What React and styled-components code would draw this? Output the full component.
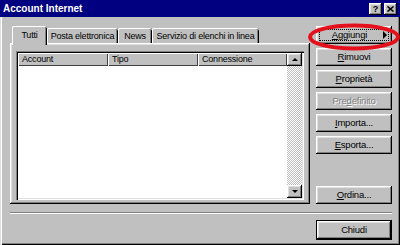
import React from 'react';
import styled, { createGlobalStyle } from 'styled-components';

const GlobalStyle = createGlobalStyle`
  html, body {
    margin: 0;
    padding: 0;
    background: #c0c0c0;
  }
  body {
    font-family: "Liberation Sans", Arial, sans-serif;
  }
  * {
    box-sizing: border-box;
  }
`;

const raised = `
  box-shadow: inset -1px -1px #000, inset 1px 1px #fff,
    inset -2px -2px #808080, inset 2px 2px #dfdfdf;
`;

const sunken = `
  box-shadow: inset 1px 1px #808080, inset 2px 2px #000,
    inset -1px -1px #fff, inset -2px -2px #dfdfdf;
`;

export default function App() {
  return (
    <>
      <GlobalStyle />
      <Window>
        <TitleBar>
          <span>Account Internet</span>
          <TitleButtons>
            <TitleButton>?</TitleButton>
            <TitleButton>
              <svg width="7" height="6" viewBox="0 0 7 6">
                <path d="M0.5 0.5 L6.5 5.5 M6.5 0.5 L0.5 5.5" stroke="#000" strokeWidth="1.6" />
              </svg>
            </TitleButton>
          </TitleButtons>
        </TitleBar>

        <Main>
          <LeftColumn>
            <TabRow>
              <Tab width={35} selected>Tutti</Tab>
              <Tab width={71}>Posta elettronica</Tab>
              <Tab width={34}>News</Tab>
              <Tab width={107}>Servizio di elenchi in linea</Tab>
            </TabRow>
            <Panel>
              <ListView>
                <ListContent>
                  <Header>
                    <HeaderCell width="90px">Account</HeaderCell>
                    <HeaderCell width="90px">Tipo</HeaderCell>
                    <HeaderCell>Connessione</HeaderCell>
                  </Header>
                </ListContent>
                <ScrollBar>
                  <ScrollButton>
                    <Arrow up />
                  </ScrollButton>
                  <Track />
                  <ScrollButton>
                    <Arrow />
                  </ScrollButton>
                </ScrollBar>
              </ListView>
            </Panel>
          </LeftColumn>

          <ButtonColumn>
            <Button focused>
              <Label><u>A</u>ggiungi</Label>
              <MenuArrow />
            </Button>
            <Button><Label><u>R</u>imuovi</Label></Button>
            <Button><Label><u>P</u>roprietà</Label></Button>
            <Button disabled><Label>Pre<u>d</u>efinito</Label></Button>
            <Button><Label><u>I</u>mporta...</Label></Button>
            <Button><Label><u>E</u>sporta...</Label></Button>
            <Spacer />
            <Button><Label><u>O</u>rdina...</Label></Button>
          </ButtonColumn>
        </Main>

        <Separator />

        <Footer>
          <DefaultButton>
            <Button><Label>Chiudi</Label></Button>
          </DefaultButton>
        </Footer>

        <Highlight width="400" height="245" viewBox="0 0 400 245">
          <ellipse cx="354" cy="37" rx="44" ry="11.5" fill="none" stroke="#e4101c" strokeWidth="4" />
        </Highlight>
      </Window>
    </>
  );
}

const Window = styled.div`
  position: relative;
  width: 400px;
  height: 245px;
  overflow: hidden;
  background: #c0c0c0;
  display: flex;
  flex-direction: column;
  box-shadow: inset 1px 0 #dfdfdf, inset 2px 0 #fff, inset -1px -1px #000,
    inset -2px -2px #808080;
  font-size: 9px;
  letter-spacing: -0.2px;
  color: #000;
`;

const TitleBar = styled.div`
  height: 17px;
  flex: none;
  background: #000080;
  color: #fff;
  font-weight: bold;
  font-size: 10px;
  letter-spacing: 0;
  display: flex;
  align-items: center;
  justify-content: space-between;
  padding: 0 3px 0 3px;
`;

const TitleButtons = styled.div`
  display: flex;
  gap: 2px;
  align-self: flex-end;
  padding-bottom: 2px;
`;

const TitleButton = styled.div`
  width: 13px;
  height: 12px;
  background: #c0c0c0;
  ${raised}
  color: #000;
  font-size: 9px;
  font-weight: bold;
  display: flex;
  align-items: center;
  justify-content: center;
  padding-bottom: 1px;
`;

const Main = styled.div`
  display: flex;
  gap: 6px;
  height: 187px;
  flex: none;
  padding: 9px 8px 0 10px;
`;

const LeftColumn = styled.div`
  width: 300px;
  display: flex;
  flex-direction: column;
`;

const TabRow = styled.div`
  display: flex;
  align-items: flex-end;
  height: 17px;
  padding-left: 2px;
  flex: none;
`;

const Tab = styled.div`
  position: relative;
  z-index: ${(p) => (p.selected ? 2 : 0)};
  width: ${(p) => p.width}px;
  height: ${(p) => (p.selected ? 19 : 15)}px;
  margin-bottom: ${(p) => (p.selected ? -2 : 0)}px;
  background: #c0c0c0;
  border-radius: 2px 2px 0 0;
  box-shadow: inset 1px 0 #fff, inset 0 1px #fff, inset -1px 0 #000,
    inset -2px 0 #808080;
  display: flex;
  justify-content: center;
  padding-top: ${(p) => (p.selected ? 4 : 3)}px;
  white-space: nowrap;
`;

const Panel = styled.div`
  flex: 1;
  display: flex;
  background: #c0c0c0;
  ${raised}
  padding: 8px 6px 4px 6px;
`;

const ListView = styled.div`
  flex: 1;
  display: flex;
  background: #fff;
  ${sunken}
  padding: 2px;
`;

const ListContent = styled.div`
  flex: 1;
  display: flex;
  flex-direction: column;
`;

const Header = styled.div`
  display: flex;
  height: 13px;
`;

const HeaderCell = styled.div`
  width: ${(p) => p.width || 'auto'};
  flex: ${(p) => (p.width ? 'none' : 1)};
  background: #c0c0c0;
  box-shadow: inset 1px 1px #fff, inset -1px -1px #404040;
  padding-left: 4px;
  line-height: 13px;
  white-space: nowrap;
`;

const ScrollBar = styled.div`
  width: 15px;
  display: flex;
  flex-direction: column;
`;

const ScrollButton = styled.div`
  height: 13px;
  background: #c0c0c0;
  ${raised}
  display: flex;
  align-items: center;
  justify-content: center;
`;

const Arrow = styled.span`
  width: 0;
  height: 0;
  border-left: 3px solid transparent;
  border-right: 3px solid transparent;
  ${(p) => (p.up ? 'border-bottom: 3px solid #000;' : 'border-top: 3px solid #000;')}
`;

const Track = styled.div`
  flex: 1;
  background: repeating-conic-gradient(#fff 0 25%, #c0c0c0 0 50%) 0 0 / 2px 2px;
`;

const ButtonColumn = styled.div`
  width: 76px;
  display: flex;
  flex-direction: column;
  gap: 4px;
`;

const Spacer = styled.div`
  flex: 1;
`;

const Button = styled.div`
  position: relative;
  height: 18px;
  flex: none;
  background: #c0c0c0;
  ${raised}
  display: flex;
  align-items: center;
  padding-bottom: 1px;
  font-size: 9.5px;
  color: ${(p) => (p.disabled ? '#808080' : '#000')};
  text-shadow: ${(p) => (p.disabled ? '1px 1px #fff' : 'none')};

  ${(p) =>
    p.focused &&
    `
    &::after {
      content: '';
      position: absolute;
      inset: 3px;
      border: 1px dotted #000;
    }
  `}
`;

const Label = styled.span`
  flex: 1;
  text-align: center;
  white-space: nowrap;
`;

const MenuArrow = styled.span`
  width: 0;
  height: 0;
  margin-right: 5px;
  border-left: 4px solid #000;
  border-top: 4px solid transparent;
  border-bottom: 4px solid transparent;
`;

const Separator = styled.div`
  margin: 8px 8px 0 10px;
  border-top: 1px solid #808080;
  border-bottom: 1px solid #fff;
  flex: none;
`;

const Footer = styled.div`
  display: flex;
  justify-content: flex-end;
  padding: 6px 8px 0 0;
`;

const DefaultButton = styled.div`
  width: 76px;
  border: 1px solid #000;
  display: flex;
  flex-direction: column;
`;

const Highlight = styled.svg`
  position: absolute;
  left: 0;
  top: 0;
  pointer-events: none;
`;
